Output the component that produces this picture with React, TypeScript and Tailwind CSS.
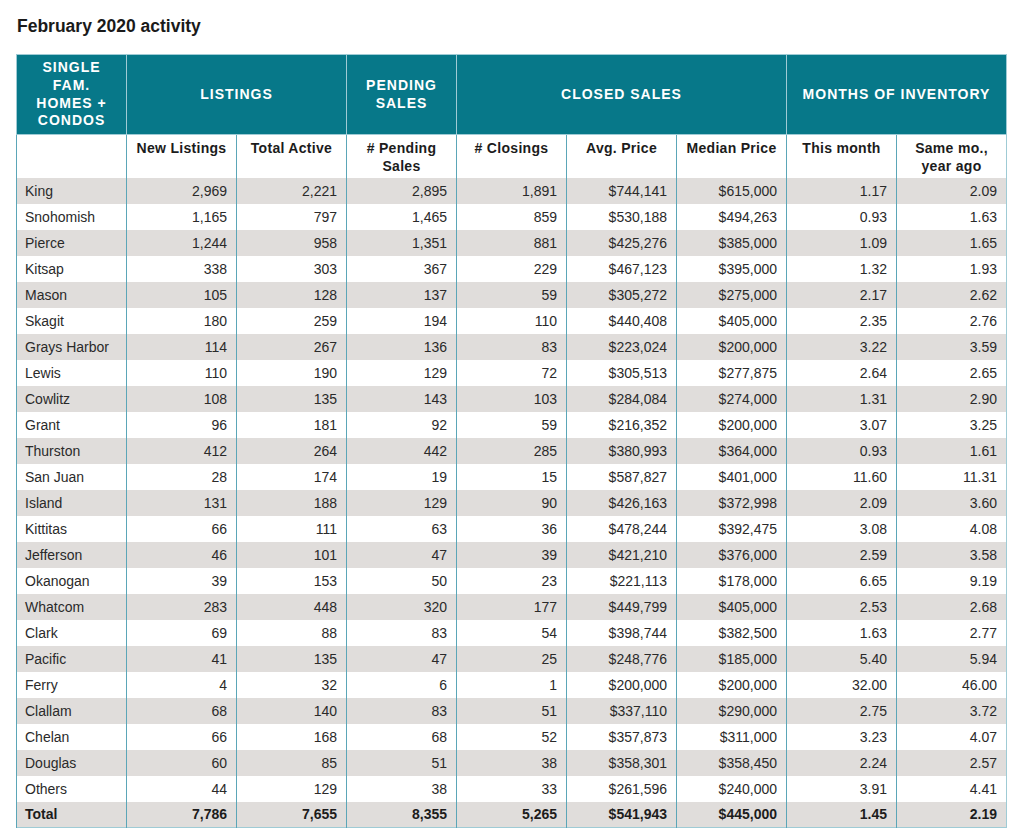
import React from "react";

const rows: [string, string, string, string, string, string, string, string, string][] = [
  ["King", "2,969", "2,221", "2,895", "1,891", "$744,141", "$615,000", "1.17", "2.09"],
  ["Snohomish", "1,165", "797", "1,465", "859", "$530,188", "$494,263", "0.93", "1.63"],
  ["Pierce", "1,244", "958", "1,351", "881", "$425,276", "$385,000", "1.09", "1.65"],
  ["Kitsap", "338", "303", "367", "229", "$467,123", "$395,000", "1.32", "1.93"],
  ["Mason", "105", "128", "137", "59", "$305,272", "$275,000", "2.17", "2.62"],
  ["Skagit", "180", "259", "194", "110", "$440,408", "$405,000", "2.35", "2.76"],
  ["Grays Harbor", "114", "267", "136", "83", "$223,024", "$200,000", "3.22", "3.59"],
  ["Lewis", "110", "190", "129", "72", "$305,513", "$277,875", "2.64", "2.65"],
  ["Cowlitz", "108", "135", "143", "103", "$284,084", "$274,000", "1.31", "2.90"],
  ["Grant", "96", "181", "92", "59", "$216,352", "$200,000", "3.07", "3.25"],
  ["Thurston", "412", "264", "442", "285", "$380,993", "$364,000", "0.93", "1.61"],
  ["San Juan", "28", "174", "19", "15", "$587,827", "$401,000", "11.60", "11.31"],
  ["Island", "131", "188", "129", "90", "$426,163", "$372,998", "2.09", "3.60"],
  ["Kittitas", "66", "111", "63", "36", "$478,244", "$392,475", "3.08", "4.08"],
  ["Jefferson", "46", "101", "47", "39", "$421,210", "$376,000", "2.59", "3.58"],
  ["Okanogan", "39", "153", "50", "23", "$221,113", "$178,000", "6.65", "9.19"],
  ["Whatcom", "283", "448", "320", "177", "$449,799", "$405,000", "2.53", "2.68"],
  ["Clark", "69", "88", "83", "54", "$398,744", "$382,500", "1.63", "2.77"],
  ["Pacific", "41", "135", "47", "25", "$248,776", "$185,000", "5.40", "5.94"],
  ["Ferry", "4", "32", "6", "1", "$200,000", "$200,000", "32.00", "46.00"],
  ["Clallam", "68", "140", "83", "51", "$337,110", "$290,000", "2.75", "3.72"],
  ["Chelan", "66", "168", "68", "52", "$357,873", "$311,000", "3.23", "4.07"],
  ["Douglas", "60", "85", "51", "38", "$358,301", "$358,450", "2.24", "2.57"],
  ["Others", "44", "129", "38", "33", "$261,596", "$240,000", "3.91", "4.41"],
  ["Total", "7,786", "7,655", "8,355", "5,265", "$541,943", "$445,000", "1.45", "2.19"],
];

const groupCell =
  "h-[80px] border border-[#9fcbd5] bg-[#077889] px-2 text-center align-middle text-[14px] font-bold uppercase leading-[17.7px] tracking-[1px] text-white";
const subCell =
  "h-[43px] border-l border-[#5ba6b8] px-1 pt-[4px] text-center align-top text-[14px] font-bold leading-[18px] tracking-[0.3px] text-[#1c1c1c]";

export default function App() {
  return (
    <div className="min-h-[840px] w-[1024px] bg-white pl-4 pt-[15px] font-['Liberation_Sans',Arial,sans-serif]">
      <h1 className="pl-px text-[17.5px] font-bold leading-[22px] text-[#1a1a1a]">February 2020 activity</h1>
      <table className="mt-[17px] w-[990px] table-fixed border-collapse border border-[#9fcbd5]">
        <colgroup>
          {Array.from({ length: 9 }).map((_, i) => (
            <col key={i} className="w-[110px]" />
          ))}
        </colgroup>
        <thead>
          <tr>
            <th className={groupCell}>
              Single
              <br />
              Fam.
              <br />
              Homes +
              <br />
              Condos
            </th>
            <th colSpan={2} className={groupCell}>
              Listings
            </th>
            <th className={groupCell}>
              Pending
              <br />
              Sales
            </th>
            <th colSpan={3} className={groupCell}>
              Closed Sales
            </th>
            <th colSpan={2} className={groupCell}>
              Months of Inventory
            </th>
          </tr>
          <tr>
            <th className={subCell}></th>
            <th className={subCell}>New Listings</th>
            <th className={subCell}>Total Active</th>
            <th className={subCell}>
              # Pending
              <br />
              Sales
            </th>
            <th className={subCell}># Closings</th>
            <th className={subCell}>Avg. Price</th>
            <th className={subCell}>Median Price</th>
            <th className={subCell}>This month</th>
            <th className={subCell}>
              Same mo.,
              <br />
              year ago
            </th>
          </tr>
        </thead>
        <tbody>
          {rows.map((r, i) => {
            const last = i === rows.length - 1;
            return (
              <tr key={r[0]} className={i % 2 === 0 ? "bg-[#e0dddb]" : "bg-white"}>
                {r.map((v, j) => (
                  <td
                    key={j}
                    className={`h-[26px] border-l border-[#5ba6b8] text-[14px] leading-[16px] ${
                      last ? "font-bold text-[#1c1c1c]" : "text-[#2a2a2a]"
                    } ${j === 0 ? "pl-2 text-left" : "pr-[9px] text-right"}`}
                  >
                    {v}
                  </td>
                ))}
              </tr>
            );
          })}
        </tbody>
      </table>
    </div>
  );
}
